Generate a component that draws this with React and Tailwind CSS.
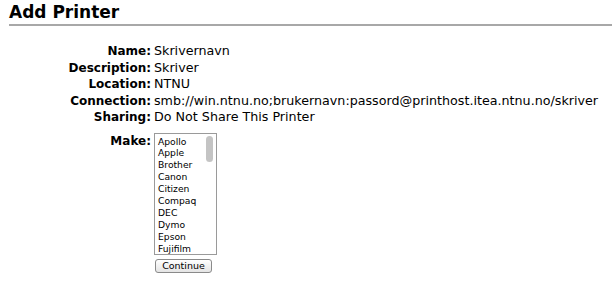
const makes = ["Apollo", "Apple", "Brother", "Canon", "Citizen", "Compaq", "DEC", "Dymo", "Epson", "Fujifilm"];

const rows = [
  ["Name:", "Skrivernavn"],
  ["Description:", "Skriver"],
  ["Location:", "NTNU"],
  ["Connection:", "smb://win.ntnu.no;brukernavn:passord@printhost.itea.ntnu.no/skriver"],
  ["Sharing:", "Do Not Share This Printer"],
];

export default function App() {
  return (
    <div className="w-[612px] h-[286px] bg-white text-black overflow-hidden" style={{ fontFamily: '"DejaVu Sans", sans-serif' }}>
      <div className="pl-[9px] pt-[1px]">
        <h1 className="text-[17px] font-bold leading-[22px]">Add Printer</h1>
        <div className="mt-[1px] h-[2px] bg-[#a8a8a8]" />
      </div>
      <div className="grid grid-cols-[151px_1fr] gap-x-[3px] mt-[17px] text-[12px] leading-[16.5px]">
        {rows.map(([label, value]) => (
          <div key={label} className="contents">
            <div className="text-right font-bold">{label}</div>
            <div className="whitespace-nowrap text-[12.7px]">{value}</div>
          </div>
        ))}
        <div className="mt-[7px] text-right font-bold">Make:</div>
        <div className="mt-[7px]">
          <div className="relative w-[63px] h-[122px] border border-[#9a9a9a] bg-white overflow-hidden">
            <div className="pl-[3px] pt-[2px] text-[9.2px] leading-[11.9px]">
              {makes.map((m) => (
                <div key={m}>{m}</div>
              ))}
            </div>
            <div className="absolute right-[3px] top-[2px] w-[7px] h-[26px] rounded-full bg-[#c4c4c4]" />
          </div>
          <button className="mt-[4px] ml-[1px] h-[14px] w-[57px] rounded-[3px] border border-[#8a8a8a] bg-gradient-to-b from-white to-[#e4e4e4] text-[9.5px] leading-[12px]">
            Continue
          </button>
        </div>
      </div>
    </div>
  );
}
